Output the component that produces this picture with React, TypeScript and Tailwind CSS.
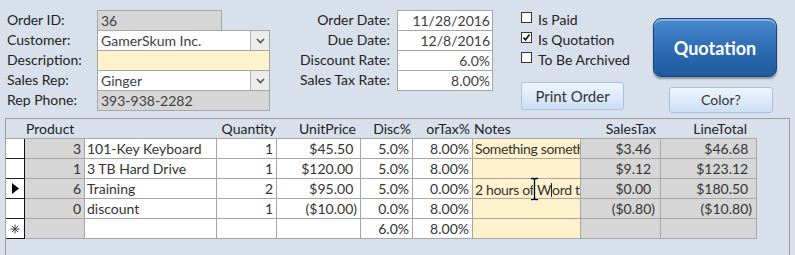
import React from "react";

const font = { fontFamily: "Lato, 'Open Sans', sans-serif" };

function Chevron() {
  return (
    <div className="flex h-full w-[19px] items-center justify-center border-l border-[#b4b4b4] bg-[#ececec]">
      <svg width="9" height="6" viewBox="0 0 9 6">
        <path d="M1 1 L4.5 4.5 L8 1" fill="none" stroke="#555" strokeWidth="1.6" />
      </svg>
    </div>
  );
}

function Field({ w, bg, children, combo }: { w: string; bg: string; children?: React.ReactNode; combo?: boolean }) {
  return (
    <div className={`flex h-[21px] shrink-0 items-center border border-[#a6a6a6] ${w} ${bg}`}>
      <div className="flex-1 overflow-hidden whitespace-nowrap px-[3px] leading-[18px] text-[#404040]">{children}</div>
      {combo ? <Chevron /> : null}
    </div>
  );
}

function Check({ checked, label }: { checked?: boolean; label: string }) {
  return (
    <div className="flex h-[20px] items-center whitespace-nowrap">
      <div className="mb-[5px] flex h-[11px] w-[11px] shrink-0 items-center justify-center border border-[#333] bg-white">
        {checked ? (
          <svg width="9" height="9" viewBox="0 0 9 9">
            <path d="M1.5 4.5 L3.5 7 L7.5 1.5" fill="none" stroke="#111" strokeWidth="1.6" />
          </svg>
        ) : null}
      </div>
      <span className="ml-[6px] text-[#222]">{label}</span>
    </div>
  );
}

const cols = [
  "w-[19px]",
  "w-[60px]",
  "w-[132px]",
  "w-[60px]",
  "w-[84px]",
  "w-[52px]",
  "w-[60px]",
  "w-[108px]",
  "w-[80px]",
  "w-[96px]",
];

type Row = {
  sel?: "arrow" | "star";
  id: string;
  name: string;
  qty: string;
  price: string;
  disc: string;
  tax: string;
  notes: React.ReactNode;
  stax: string;
  total: string;
};

const rows: Row[] = [
  { id: "3", name: "101-Key Keyboard", qty: "1", price: "$45.50", disc: "5.0%", tax: "8.00%", notes: "Something something", stax: "$3.46", total: "$46.68" },
  { id: "1", name: "3 TB Hard Drive", qty: "1", price: "$120.00", disc: "5.0%", tax: "8.00%", notes: "", stax: "$9.12", total: "$123.12" },
  {
    sel: "arrow",
    id: "6",
    name: "Training",
    qty: "2",
    price: "$95.00",
    disc: "5.0%",
    tax: "0.00%",
    notes: (
      <>
        2 hours of W<span className="inline-block h-[14px] w-px translate-y-[2px] bg-[#222]" />ord training
      </>
    ),
    stax: "$0.00",
    total: "$180.50",
  },
  { id: "0", name: "discount", qty: "1", price: "($10.00)", disc: "0.0%", tax: "8.00%", notes: "", stax: "($0.80)", total: "($10.80)" },
  { sel: "star", id: "", name: "", qty: "", price: "", disc: "6.0%", tax: "8.00%", notes: "", stax: "", total: "" },
];

// currency values leave room for a closing parenthesis
function Money({ v }: { v: string }) {
  if (!v) return null;
  if (v.startsWith("(")) return <>{v}</>;
  return (
    <>
      {v}
      <span className="invisible">)</span>
    </>
  );
}

function Cell({ w, bg, align = "right", children, extra = "" }: { w: string; bg: string; align?: "left" | "right"; children?: React.ReactNode; extra?: string }) {
  return (
    <div
      className={`flex h-[20px] shrink-0 items-center overflow-hidden border-b border-r border-[#a6a6a6] ${w} ${bg} ${
        align === "right" ? "justify-end pr-[3px]" : "justify-start pl-[2px]"
      } ${extra}`}
    >
      <span className="shrink-0 whitespace-nowrap">{children}</span>
    </div>
  );
}

function Selector({ kind }: { kind?: "arrow" | "star" }) {
  return (
    <div className="flex h-[20px] w-[19px] shrink-0 items-center justify-center border-b border-r border-b-[#222] border-r-[#111] bg-white">
      {kind === "arrow" ? (
        <svg width="7" height="11" viewBox="0 0 7 11">
          <path d="M0 0 L7 5.5 L0 11 Z" fill="#000" />
        </svg>
      ) : kind === "star" ? (
        <svg width="10" height="10" viewBox="0 0 10 10">
          <path d="M5 0.5 V9.5 M0.5 5 H9.5 M1.8 1.8 L8.2 8.2 M8.2 1.8 L1.8 8.2" stroke="#444" strokeWidth="1" />
        </svg>
      ) : null}
    </div>
  );
}

export default function App() {
  return (
    <div className="h-[255px] w-[795px] overflow-hidden bg-[#d8e0ec] text-[14px] leading-none" style={font}>
      <div className="flex h-[118px] pt-[10px]">
        <div className="ml-[7px] flex flex-col">
          {[
            ["Order ID:", <Field key="a" w="w-[125px]" bg="bg-[#d6d6d6]">36</Field>],
            ["Customer:", <Field key="b" w="w-[173px]" bg="bg-white" combo>GamerSkum Inc.</Field>],
            ["Description:", <Field key="c" w="w-[173px]" bg="bg-[#fff2cc]" />],
            ["Sales Rep:", <Field key="d" w="w-[173px]" bg="bg-white" combo>Ginger</Field>],
            ["Rep Phone:", <Field key="e" w="w-[173px]" bg="bg-[#d6d6d6]">393-938-2282</Field>],
          ].map(([label, field], i) => (
            <div key={i} className="flex h-[20px] items-start">
              <span className="w-[90px] pt-[3px] text-[#222]">{label}</span>
              {field}
            </div>
          ))}
        </div>

        <div className="flex flex-col">
          {[
            ["Order Date:", "11/28/2016"],
            ["Due Date:", "12/8/2016"],
            ["Discount Rate:", "6.0%"],
            ["Sales Tax Rate:", "8.00%"],
          ].map(([label, value]) => (
            <div key={label} className="flex h-[20px] items-start">
              <span className="w-[120px] pt-[3px] text-right text-[#222]">{label}</span>
              <div className="ml-[7px] flex h-[21px] w-[96px] items-center justify-end border border-[#a6a6a6] bg-white pr-[2px] text-[#404040]">
                {value}
              </div>
            </div>
          ))}
        </div>

        <div className="ml-[28px] flex w-[104px] flex-col">
          <Check label="Is Paid" />
          <Check checked label="Is Quotation" />
          <Check label="To Be Archived" />
          <button className="mt-[12px] h-[28px] w-[103px] rounded-[3px] border border-[#a9c2e2] bg-gradient-to-b from-[#eef5fd] to-[#cddff5] text-[15px] text-[#333]">
            Print Order
          </button>
        </div>

        <div className="ml-[28px] flex flex-col">
          <button className="mt-[8px] h-[59px] w-[124px] rounded-[8px] border border-[#17467e] bg-gradient-to-b from-[#4a8bd0] via-[#2f6db5] to-[#1f5a9c] text-[18px] font-bold text-white shadow-[inset_0_2px_0_rgba(255,255,255,0.35),0_2px_2px_rgba(0,0,0,0.35)]">
            Quotation
          </button>
          <button className="ml-[16px] mt-[10px] h-[26px] w-[104px] rounded-[3px] border border-[#a9c2e2] bg-gradient-to-b from-[#eef5fd] to-[#cddff5] text-[14px] text-[#333]">
            Color?
          </button>
        </div>
      </div>

      <div className="relative ml-[5px] h-[137px] w-[785px] border-l border-r border-t border-[#a0a0a0] text-[#333]">
        <div className="flex h-[19px] items-center text-[#222]">
          <div className="w-[19px] shrink-0" />
          <div className="w-[192px] shrink-0 pl-[1px]">Product</div>
          <div className="w-[60px] shrink-0 pr-[1px] text-right">Quantity</div>
          <div className="w-[84px] shrink-0 pr-[5px] text-right">UnitPrice</div>
          <div className="w-[52px] shrink-0 pr-[2px] text-right">Disc%</div>
          <div className="w-[60px] shrink-0 pr-[3px] text-right">orTax%</div>
          <div className="w-[108px] shrink-0 pl-[1px]">Notes</div>
          <div className="w-[80px] shrink-0 pr-[5px] text-right">SalesTax</div>
          <div className="w-[96px] shrink-0 pr-[10px] text-right">LineTotal</div>
        </div>
        <div className="flex w-[751px] flex-col border-t border-[#a6a6a6]">
          {rows.map((r, i) => {
            const blank = r.sel === "star";
            return (
              <div key={i} className="flex">
                <Selector kind={r.sel} />
                <Cell w={cols[1]} bg="bg-[#d6d6d6]" extra="pr-[2px]">{r.id}</Cell>
                <Cell w={cols[2]} bg="bg-white" align="left">{r.name}</Cell>
                <Cell w={cols[3]} bg="bg-white" extra="pr-[2px]">{r.qty}</Cell>
                <Cell w={cols[4]} bg="bg-white"><Money v={r.price} /></Cell>
                <Cell w={cols[5]} bg="bg-white">{r.disc}</Cell>
                <Cell w={cols[6]} bg="bg-white">{r.tax}</Cell>
                <Cell w={cols[7]} bg="bg-[#fff2cc]" align="left" extra="tracking-[-0.35px]">{r.notes}</Cell>
                <Cell w={cols[8]} bg="bg-[#d6d6d6]" extra="pr-[5px]"><Money v={r.stax} /></Cell>
                <Cell w={cols[9]} bg="bg-[#d6d6d6]" extra="pr-[4px]">{blank ? null : <Money v={r.total} />}</Cell>
              </div>
            );
          })}
        </div>

        {/* mouse I-beam over the notes cell */}
        <svg className="absolute left-[524px] top-[58px]" width="9" height="24" viewBox="0 0 9 24">
          <path d="M1 1.5 H3.5 L4.5 2.5 L5.5 1.5 H8 M4.5 2.5 V21.5 M1 22.5 H3.5 L4.5 21.5 L5.5 22.5 H8" fill="none" stroke="#fff" strokeWidth="3" />
          <path d="M1 1.5 H3.5 L4.5 2.5 L5.5 1.5 H8 M4.5 2.5 V21.5 M1 22.5 H3.5 L4.5 21.5 L5.5 22.5 H8" fill="none" stroke="#000" strokeWidth="1.4" />
        </svg>
      </div>
    </div>
  );
}
